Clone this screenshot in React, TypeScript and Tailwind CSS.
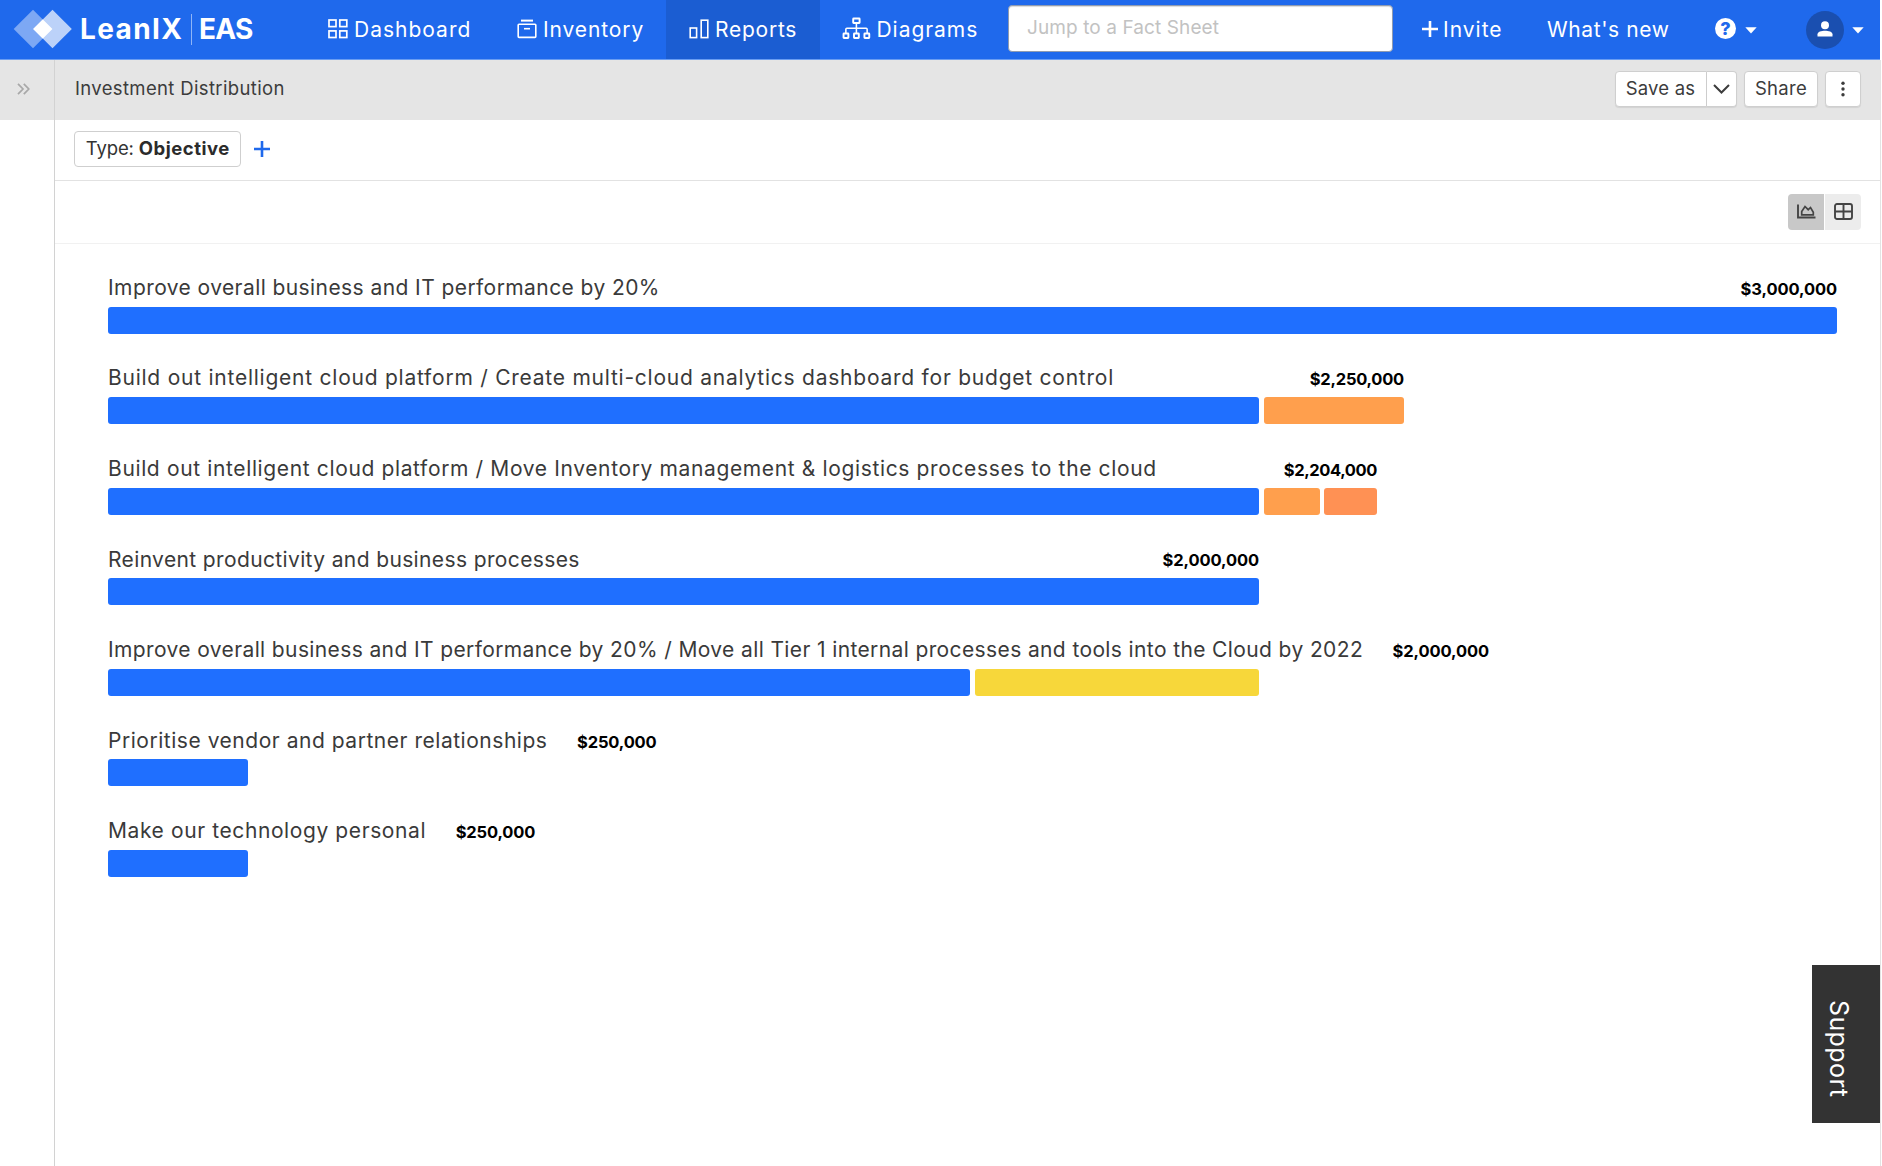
import type { ReactNode } from "react";

type Segment = { width: string; color: string };
type Row = {
  label: string;
  tracking: string;
  amount: string;
  amountTracking: string;
  width: string;
  segments: Segment[];
};

const BLUE = "bg-[#1f6fff]";
const ORANGE = "bg-[#ff9f4d]";
const CORAL = "bg-[#ff9154]";
const YELLOW = "bg-[#f7d73a]";

const rows: Row[] = [
  {
    label: "Improve overall business and IT performance by 20%",
    tracking: "tracking-[0.42px]",
    amount: "$3,000,000",
    amountTracking: "tracking-[-0.1px]",
    width: "min-w-[1729px]",
    segments: [{ width: "w-[1729px]", color: BLUE }],
  },
  {
    label: "Build out intelligent cloud platform / Create multi-cloud analytics dashboard for budget control",
    tracking: "tracking-[0.76px]",
    amount: "$2,250,000",
    amountTracking: "tracking-[-0.25px]",
    width: "min-w-[1296px]",
    segments: [
      { width: "w-[1151px]", color: BLUE },
      { width: "w-[140px]", color: ORANGE },
    ],
  },
  {
    label: "Build out intelligent cloud platform / Move Inventory management & logistics processes to the cloud",
    tracking: "tracking-[0.635px]",
    amount: "$2,204,000",
    amountTracking: "tracking-[-0.4px]",
    width: "min-w-[1269px]",
    segments: [
      { width: "w-[1151px]", color: BLUE },
      { width: "w-[56px]", color: ORANGE },
      { width: "w-[52.5px]", color: CORAL },
    ],
  },
  {
    label: "Reinvent productivity and business processes",
    tracking: "tracking-[0.37px]",
    amount: "$2,000,000",
    amountTracking: "tracking-[-0.1px]",
    width: "min-w-[1151px]",
    segments: [{ width: "w-[1151px]", color: BLUE }],
  },
  {
    label: "Improve overall business and IT performance by 20% / Move all Tier 1 internal processes and tools into the Cloud by 2022",
    tracking: "tracking-[0.38px]",
    amount: "$2,000,000",
    amountTracking: "tracking-[-0.1px]",
    width: "min-w-[1151px]",
    segments: [
      { width: "w-[862px]", color: BLUE },
      { width: "w-[284.5px]", color: YELLOW },
    ],
  },
  {
    label: "Prioritise vendor and partner relationships",
    tracking: "tracking-[0.53px]",
    amount: "$250,000",
    amountTracking: "tracking-[-0.15px]",
    width: "min-w-[140px]",
    segments: [{ width: "w-[140px]", color: BLUE }],
  },
  {
    label: "Make our technology personal",
    tracking: "tracking-[0.6px]",
    amount: "$250,000",
    amountTracking: "tracking-[-0.15px]",
    width: "min-w-[140px]",
    segments: [{ width: "w-[140px]", color: BLUE }],
  },
];

function NavItem({ icon, children, className }: { icon: ReactNode; children: ReactNode; className: string }) {
  return (
    <div className={`flex h-full shrink-0 items-center gap-1.5 whitespace-nowrap text-[21px] ${className}`}>
      {icon}
      <span>{children}</span>
    </div>
  );
}

function DashboardIcon() {
  return (
    <svg width="20" height="20" viewBox="0 0 20 20" fill="none" stroke="currentColor" strokeWidth="1.7" className="mb-[2px] shrink-0">
      <rect x="1" y="1" width="7" height="6.6" />
      <rect x="11.8" y="1" width="7" height="6.6" />
      <rect x="1" y="11.9" width="7" height="6.6" />
      <rect x="11.8" y="11.9" width="7" height="6.6" />
    </svg>
  );
}

function InventoryIcon() {
  return (
    <svg width="20" height="20" viewBox="0 0 20 20" fill="none" stroke="currentColor" strokeWidth="1.6" className="mb-[2px] shrink-0">
      <path d="M4 1.6h12" strokeWidth="2" />
      <rect x="1.2" y="5.2" width="17.6" height="13.2" rx="0.8" />
      <path d="M7 9.7h6" />
    </svg>
  );
}

function ReportsIcon() {
  return (
    <svg width="20" height="20" viewBox="0 0 20 20" fill="none" stroke="currentColor" strokeWidth="1.6" className="mb-[2px] shrink-0">
      <rect x="1.2" y="9" width="6.4" height="9.6" />
      <rect x="12.2" y="1.2" width="6.6" height="17.4" />
    </svg>
  );
}

function DiagramsIcon() {
  return (
    <svg width="29" height="23" viewBox="0 0 30 23" fill="none" stroke="currentColor" strokeWidth="2" className="mb-[3px] shrink-0">
      <rect x="11.6" y="1.2" width="6.6" height="4.6" rx="0.5" />
      <rect x="1.6" y="16.6" width="5" height="4.8" rx="0.5" />
      <rect x="12.4" y="16.6" width="5" height="4.8" rx="0.5" />
      <rect x="23.2" y="16.6" width="5" height="4.8" rx="0.5" />
      <path d="M14.9 6v10.4M4 16.4v-4.2q0-1 1-1h20q1 0 1 1v4.2" strokeWidth="1.6" />
    </svg>
  );
}

function Caret({ className }: { className: string }) {
  return (
    <svg width="12" height="7" viewBox="0 0 12 7" fill="currentColor" className={`shrink-0 ${className}`}>
      <path d="M0.3 0.3h11.4L6 6.6z" />
    </svg>
  );
}

function Header() {
  return (
    <header className="flex h-[60px] w-[1880px] items-center border-b border-[#6a9df2] bg-[#1f69ec] text-white">
      <svg width="60" height="40" viewBox="0 0 60 40" className="mb-[2px] ml-[13px] shrink-0">
        <path d="M20 .7 39.3 20 20 39.3 .7 20z" fill="#fff" fillOpacity=".42" />
        <path d="M39.5 .7 58.8 20 39.5 39.3 20.2 20z" fill="#fff" fillOpacity=".7" />
        <path d="M29.8 10.5 39.3 20 29.8 29.5 20.2 20z" fill="#fff" />
      </svg>
      <div className="mb-[1px] ml-[7px] flex w-[225px] shrink-0 items-center text-[28px] font-bold">
        <span className="w-[111px] shrink-0 tracking-[1.4px]">LeanIX</span>
        <span className="h-[31px] w-px shrink-0 bg-[#8fb5f7]" />
        <span className="ml-[7px] tracking-[-0.7px]">EAS</span>
      </div>
      <NavItem icon={<DashboardIcon />} className="w-[189px] pl-[23px] tracking-[1px]">Dashboard</NavItem>
      <NavItem icon={<InventoryIcon />} className="w-[172px] pl-[23px] tracking-[0.9px]">Inventory</NavItem>
      <NavItem icon={<ReportsIcon />} className="w-[154px] bg-[#1b5dd2] pl-[23px] tracking-[0.75px]">Reports</NavItem>
      <NavItem icon={<DiagramsIcon />} className="w-[188px] pl-[21.5px] tracking-[0.95px]">Diagrams</NavItem>
      <div className="mb-[3px] flex h-[47px] w-[385px] shrink-0 items-center rounded-[4px] border border-[#8f9bb0] bg-white pl-[18px] text-[19px] tracking-[0.1px] text-[#c2c2c2] shadow-[inset_0_1px_1px_rgba(0,0,0,0.15)]">
        Jump to a Fact Sheet
      </div>
      <div className="ml-[29px] flex w-[124px] shrink-0 items-center gap-[5px] text-[21px] tracking-[1px]">
        <svg width="16" height="16" viewBox="0 0 16 16" stroke="currentColor" strokeWidth="2.6" className="mb-px shrink-0">
          <path d="M8 0v16M0 8h16" />
        </svg>
        <span>Invite</span>
      </div>
      <span className="ml-[1px] w-[168px] shrink-0 whitespace-nowrap text-[21px] tracking-[0.6px]">What's new</span>
      <span className="mb-[2px] flex size-[21px] shrink-0 items-center justify-center rounded-full bg-white text-[18px] font-extrabold leading-none text-[#1f69ec]">
        ?
      </span>
      <Caret className="ml-[9px] mt-[1px]" />
      <span className="ml-[49px] flex size-[38px] shrink-0 items-center justify-center rounded-full bg-[#1a4fb0]">
        <svg width="16" height="16" viewBox="0 0 16 16" fill="currentColor" className="mb-[2px]">
          <circle cx="8" cy="4.2" r="4" />
          <path d="M.5 15.5v-2.2C.5 10.7 4.5 9.7 8 9.7s7.5 1 7.5 3.6v2.2z" />
        </svg>
      </span>
      <Caret className="ml-[8px] mt-[1px]" />
    </header>
  );
}

const button = "flex h-9 items-center justify-center border border-[#cfcfcf] bg-white shadow-[0_1px_1px_rgba(0,0,0,0.08)]";

function TitleBar() {
  return (
    <div className="flex h-[59.5px] shrink-0 items-center bg-[#e5e5e5] pb-px pl-[20px] pr-[19px] text-[18.5px] text-[#3c3c3c]">
      <h1 className="tracking-[0.35px]">Investment Distribution</h1>
      <div className="ml-auto flex">
        <div className={`${button} w-[92px] rounded-l-[4px] tracking-[0.2px]`}>Save as</div>
        <div className={`${button} w-[30.5px] rounded-r-[4px] border-l-0`}>
          <svg width="17" height="10" viewBox="0 0 17 10" fill="none" stroke="currentColor" strokeWidth="2">
            <path d="m1 1 7.5 7.5L16 1" />
          </svg>
        </div>
        <div className={`${button} ml-[7px] w-[74px] rounded-[4px] tracking-[0.3px]`}>Share</div>
        <div className={`${button} ml-[7px] w-9 rounded-[4px]`}>
          <svg width="4" height="16" viewBox="0 0 4 16" fill="currentColor">
            <circle cx="2" cy="2.2" r="1.7" />
            <circle cx="2" cy="8" r="1.7" />
            <circle cx="2" cy="13.8" r="1.7" />
          </svg>
        </div>
      </div>
    </div>
  );
}

function FilterBar() {
  return (
    <div className="flex h-[61.5px] shrink-0 items-center border-b border-[#e2e2e2] pb-px pl-[18.5px] text-[18.5px] text-[#333]">
      <div className="flex h-9 w-[167.5px] items-center justify-center whitespace-nowrap rounded-[4px] border border-[#cfcfcf] pl-px">
        <span className="tracking-[-0.1px]">Type:</span>
        <span className="ml-[5px] font-bold tracking-[0.5px] text-[#2b2b2b]">Objective</span>
      </div>
      <svg width="16" height="16" viewBox="0 0 16 16" stroke="#1f69ec" strokeWidth="2.6" className="ml-[13px]">
        <path d="M8 0v16M0 8h16" />
      </svg>
    </div>
  );
}

function ViewSwitch() {
  return (
    <div className="flex h-[63px] shrink-0 items-center justify-end gap-px border-b border-[#f1f1f1] pr-[19px] text-[#444]">
      <div className="flex h-9 w-9 items-center justify-center rounded-l-[4px] bg-[#c8c8c8]">
        <svg width="19" height="15" viewBox="0 0 19 15" fill="none" stroke="currentColor" className="mb-[2px]">
          <path d="M1 .5v13h17.5" strokeWidth="1.9" />
          <path d="M4.7 10.8V7.5L8 2.5l3.2 3.2 2.3-2.2 2.8 4.8v2.5z" strokeWidth="1.7" />
        </svg>
      </div>
      <div className="flex h-9 w-9 items-center justify-center rounded-r-[4px] bg-[#ececec]">
        <svg width="19" height="17" viewBox="0 0 19 17" fill="none" stroke="currentColor" strokeWidth="1.9" className="mb-[2px]">
          <rect x="1" y="1" width="17" height="15" rx="2" />
          <path d="M9.5 1v15M1 8.5h17" />
        </svg>
      </div>
    </div>
  );
}

function Chart() {
  return (
    <div className="pl-[53px] pt-[30.5px]">
      {rows.map((row) => (
        <div key={row.label} className="h-[90.6px]">
          <div className={`flex h-[26px] w-max items-center justify-between gap-[29.5px] whitespace-nowrap ${row.width}`}>
            <span className={`text-[21px] text-[#3a3a3a] ${row.tracking}`}>{row.label}</span>
            <span className={`mt-[3px] text-[16.5px] font-bold text-black ${row.amountTracking}`}>{row.amount}</span>
          </div>
          <div className="mt-[6px] flex h-[27px] gap-[4.5px]">
            {row.segments.map((segment, i) => (
              <div key={i} className={`h-full shrink-0 rounded-[3px] ${segment.width} ${segment.color}`} />
            ))}
          </div>
        </div>
      ))}
    </div>
  );
}

export default function App() {
  return (
    <div className="relative flex h-[1166px] w-[1882px] flex-col overflow-hidden bg-white font-['Inter',sans-serif]">
      <Header />
      <div className="flex w-[1881px] flex-1 border-r border-[#e3e3e3]">
        <aside className="w-[55px] shrink-0 border-r border-[#d2d2d2]">
          <div className="flex h-[59.5px] items-center bg-[#e5e5e5] pl-[17px]">
            <svg width="13" height="12" viewBox="0 0 13 12" fill="none" stroke="#a8a8a8" strokeWidth="1.7" className="mb-[2px]">
              <path d="m1 .8 5 5.2-5 5.2M6.8.8l5 5.2-5 5.2" />
            </svg>
          </div>
        </aside>
        <main className="flex min-w-0 flex-1 flex-col">
          <TitleBar />
          <FilterBar />
          <ViewSwitch />
          <Chart />
        </main>
      </div>
      <div className="absolute right-[2px] top-[965px] flex h-[158px] w-[68px] items-center justify-center bg-[#333] pr-[15px] pt-[9px] text-white">
        <span className="text-[25px] tracking-[0.4px] [writing-mode:vertical-rl]">Support</span>
      </div>
    </div>
  );
}
